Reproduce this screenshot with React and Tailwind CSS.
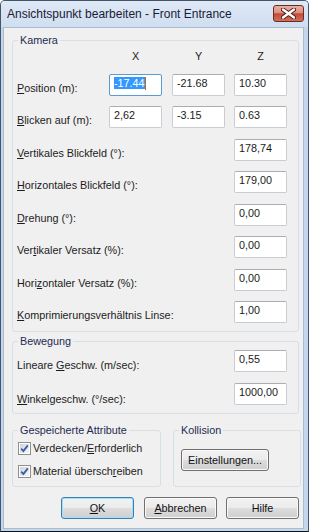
import React from 'react';

// Unterstrichener Zugriffsbuchstabe
const U = ({ children }) => <u className="underline underline-offset-[1px]">{children}</u>;

const Field = ({ value, selected = false, className = '' }) => (
  <div
    className={`w-[53px] h-[22px] shrink-0 bg-white border rounded-[2px] pl-[4px] pt-[2px] leading-[13px] text-[#1a1a1a] whitespace-nowrap ${
      selected
        ? 'border-[#5b9bd5]'
        : 'border-[#c9ccd3] border-t-[#abadb3]'
    } ${className}`}
  >
    {selected ? (
      <>
        <span className="bg-[#3399ff] text-white">{value}</span>
        <span className="inline-block w-[1px] h-[13px] bg-[#cc6600] align-top" />
      </>
    ) : (
      value
    )}
  </div>
);

const Group = ({ title, className = '', children }) => (
  <fieldset className={`min-w-0 border border-[#d5dfe5] rounded-[3px] ${className}`}>
    <legend className="ml-[5px] px-[2px] leading-[13px] text-[#1e2b50]">{title}</legend>
    {children}
  </fieldset>
);

const Checkbox = () => (
  <div className="w-[13px] h-[13px] shrink-0 border border-[#8e8f8f] bg-white p-[1px]">
    <div className="w-full h-full bg-[linear-gradient(135deg,#cfd3da,#f6f6f6)] flex items-center justify-center">
      <svg width="9" height="9" viewBox="0 0 9 9">
        <path d="M1.2 4.6 L3.4 7 L7.8 1.4" fill="none" stroke="#3a5ba6" strokeWidth="1.8" />
      </svg>
    </div>
  </div>
);

const Button = ({ children, primary = false, className = '' }) => (
  <div
    className={`h-[22px] rounded-[3px] border flex items-center justify-center leading-[13px] text-[#111] bg-[linear-gradient(#f2f2f2,#ebebeb_50%,#dddddd_50%,#cfcfcf)] ${
      primary
        ? 'border-[#3c7fb1] shadow-[inset_0_0_0_1px_#9fe0fb]'
        : 'border-[#707070] shadow-[inset_0_0_0_1px_#fafafa]'
    } ${className}`}
  >
    {children}
  </div>
);

const kameraRows = [
  { label: <><U>P</U>osition (m):</>, values: ['-17.44', '-21.68', '10.30'], mt: 'mt-[11px]', sel: true },
  { label: <><U>B</U>licken auf (m):</>, values: ['2,62', '-3.15', '0.63'], mt: 'mt-[10px]' },
  { label: <><U>V</U>ertikales Blickfeld (°):</>, values: ['178,74'], mt: 'mt-[11px]' },
  { label: <><U>H</U>orizontales Blickfeld (°):</>, values: ['179,00'], mt: 'mt-[10px]' },
  { label: <><U>D</U>rehung (°):</>, values: ['0,00'], mt: 'mt-[11px]' },
  { label: <>Ver<U>t</U>ikaler Versatz (%):</>, values: ['0,00'], mt: 'mt-[10px]' },
  { label: <>Hori<U>z</U>ontaler Versatz (%):</>, values: ['0,00'], mt: 'mt-[11px]' },
  { label: <><U>K</U>omprimierungsverhältnis Linse:</>, values: ['1,00'], mt: 'mt-[10px]' },
];

export default function App() {
  return (
    <div className="w-[309px] h-[532px] flex flex-col bg-[#c2d6ee] border border-[#44556b] border-b-[#111] rounded-t-[5px] overflow-hidden font-['Liberation_Sans',Arial,sans-serif] text-[10.8px] text-[#1c1c1c]">
      {/* Titelleiste */}
      <div className="h-[26px] shrink-0 flex items-start bg-[linear-gradient(#dfe9f6,#cfdef0)]">
        <div className="pl-[6px] pt-[6px] text-[12px] leading-[15px] text-[#1b1b36]">
          Ansichtspunkt bearbeiten - Front Entrance
        </div>
        <div className="ml-auto mt-[4px] mr-[4px] w-[31px] h-[17px] rounded-[3px] border border-[#6b2a22] bg-[linear-gradient(#eab0a3,#dc8e7e_45%,#c4493a_52%,#d0705c)] flex items-center justify-center">
          <svg width="15" height="11" viewBox="0 0 15 11">
            <path d="M2 1.5 L13 9.5 M13 1.5 L2 9.5" stroke="#4a1a14" strokeWidth="4.2" strokeLinecap="round" />
            <path d="M2 1.5 L13 9.5 M13 1.5 L2 9.5" stroke="#ffffff" strokeWidth="2.4" strokeLinecap="round" />
          </svg>
        </div>
      </div>

      {/* Clientbereich */}
      <div className="flex-1 ml-[2px] mr-[4px] mb-[2px] bg-[#f0f0f0] border border-[#a9bcd3] pl-[8px] pt-[6px]">
        <Group title="Kamera" className="w-[287px] pb-[8px]">
          <div className="mt-[3px] h-[13px] leading-[13px] flex">
            <div className="ml-auto mr-[11px] flex">
              <div className="w-[53px] text-center">X</div>
              <div className="w-[53px] ml-[10px] text-center">Y</div>
              <div className="w-[53px] ml-[9px] text-center">Z</div>
            </div>
          </div>
          {kameraRows.map((row, i) => (
            <div key={i} className={`h-[22px] flex items-start ${row.mt}`}>
              <div className="pl-[4px] pt-[8px] leading-[13px] whitespace-nowrap">{row.label}</div>
              <div className="ml-auto mr-[11px] flex">
                {row.values.length === 3 ? (
                  <>
                    <Field value={row.values[0]} selected={row.sel} />
                    <Field value={row.values[1]} className="ml-[10px]" />
                    <Field value={row.values[2]} className="ml-[9px]" />
                  </>
                ) : (
                  <Field value={row.values[0]} />
                )}
              </div>
            </div>
          ))}
        </Group>

        <Group title="Bewegung" className="w-[287px] mt-[3px] pb-[8px]">
          <div className="mt-[2px] h-[22px] flex items-start">
            <div className="pl-[4px] pt-[9px] leading-[13px]">Lineare <U>G</U>eschw. (m/sec):</div>
            <Field value="0,55" className="ml-auto mr-[11px]" />
          </div>
          <div className="mt-[11px] h-[22px] flex items-start">
            <div className="pl-[4px] pt-[10px] leading-[13px]"><U>W</U>inkelgeschw. (°/sec):</div>
            <Field value="1000,00" className="ml-auto mr-[11px]" />
          </div>
        </Group>

        <div className="mt-[10px] flex items-stretch">
          <Group title="Gespeicherte Attribute" className="w-[149px] pb-[8px]">
            <div className="mt-[5px] pl-[5px] flex items-center gap-[2px] leading-[13px]">
              <Checkbox />
              <span>Verdecken/<U>E</U>rforderlich</span>
            </div>
            <div className="mt-[10px] pl-[5px] flex items-center gap-[2px] leading-[13px]">
              <Checkbox />
              <span>Material übersch<U>r</U>eiben</span>
            </div>
          </Group>
          <Group title="Kollision" className="w-[128px] ml-[12px]">
            <Button className="w-[88px] h-[21px] mt-[12px] ml-[7px]">Einstellungen...</Button>
          </Group>
        </div>

        <div className="mt-[10px] flex">
          <Button primary className="w-[73px] ml-[49px]"><U>O</U>K</Button>
          <Button className="w-[73px] ml-[10px]"><U>A</U>bbrechen</Button>
          <Button className="w-[73px] ml-[9px]">Hilfe</Button>
        </div>
      </div>
    </div>
  );
}
